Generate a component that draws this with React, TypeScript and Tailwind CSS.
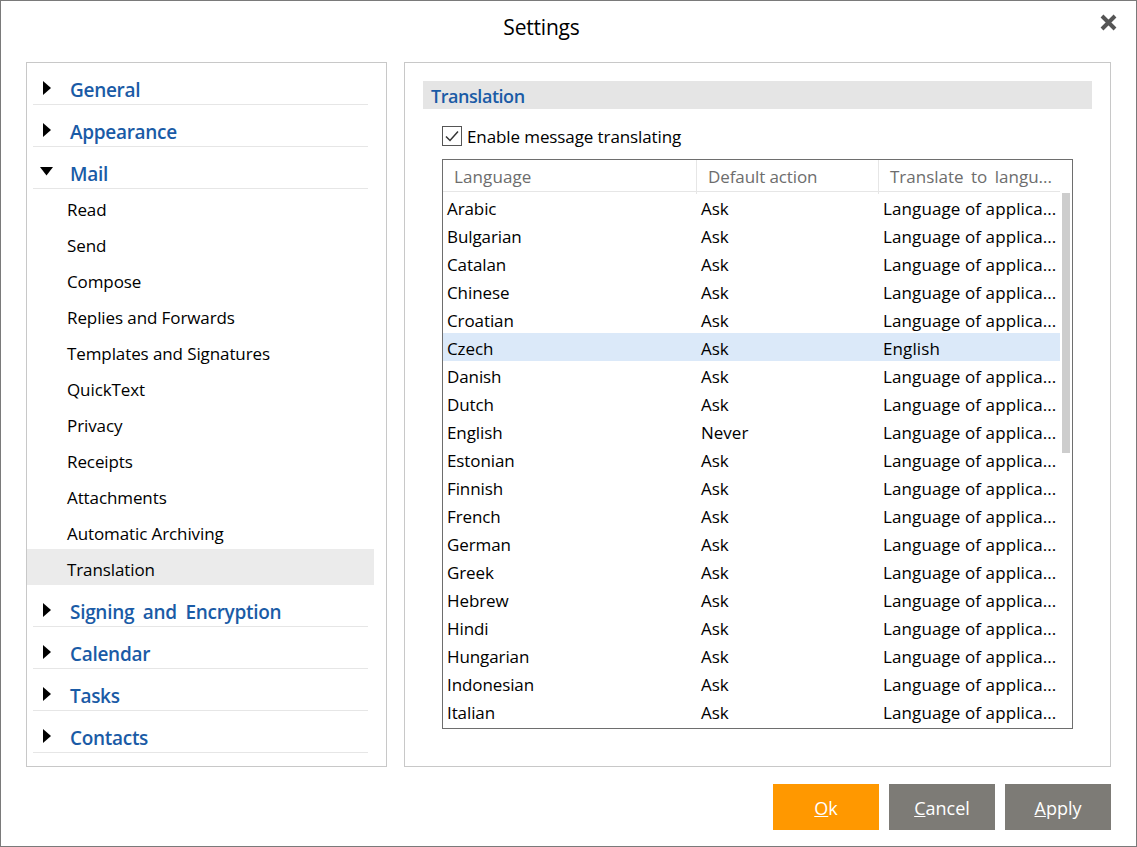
import { Fragment } from "react";

const languages = [
  "Arabic", "Bulgarian", "Catalan", "Chinese", "Croatian", "Czech", "Danish", "Dutch", "English", "Estonian",
  "Finnish", "French", "German", "Greek", "Hebrew", "Hindi", "Hungarian", "Indonesian", "Italian",
];

const mailItems = [
  "Read", "Send", "Compose", "Replies and Forwards", "Templates and Signatures", "QuickText", "Privacy",
  "Receipts", "Attachments", "Automatic Archiving", "Translation",
];

function NavHeading({ label, open }: { label: string; open?: boolean }) {
  return (
    <div className="relative h-[42px] mx-[6px] w-[335px] border-b border-[#e6e6e6] pl-[37px] pt-[12px] text-[19px] leading-[30px] tracking-[-0.3px] [word-spacing:4px] font-semibold text-[#1a5ba6]">
      {label}
      {open ? (
        <svg className="absolute left-[7px] top-[20px]" width="13" height="9" viewBox="0 0 13 9"><path d="M0 0H13L6.5 8.5Z" fill="#000" /></svg>
      ) : (
        <svg className="absolute left-[10px] top-[18px]" width="9" height="14" viewBox="0 0 9 14"><path d="M0 0L8 7L0 14Z" fill="#000" /></svg>
      )}
    </div>
  );
}

function ActionButton({ first, rest, color }: { first: string; rest: string; color: string }) {
  return (
    <button className={`w-[106px] h-[46px] pt-[2px] text-white text-[18px] ${color}`}>
      <u>{first}</u>{rest}
    </button>
  );
}

export default function App() {
  return (
    <div className="relative w-[1137px] h-[847px] bg-white border border-[#7a7a7a] text-black font-['Open_Sans',sans-serif] overflow-hidden">
      <div className="h-[61px] pt-[11px] pr-[54px] text-center text-[21px] leading-[30px] tracking-[-0.2px]">Settings</div>
      <svg className="absolute right-[19px] top-[13px]" width="17" height="17" viewBox="0 0 17 17">
        <path d="M2 2L15 15M15 2L2 15" stroke="#555" strokeWidth="4" />
      </svg>

      <div className="flex gap-[17px] pl-[25px]">
        {/* left tree */}
        <div className="w-[361px] h-[705px] border border-[#c8c8c8]">
          <NavHeading label="General" />
          <NavHeading label="Appearance" />
          <NavHeading label="Mail" open />
          {mailItems.map((item) => (
            <div
              key={item}
              className={`h-9 w-[347px] pl-[40px] pt-[6px] text-[17px] leading-[30px] tracking-[-0.1px] ${item === "Translation" ? "bg-[#ebebeb]" : ""}`}
            >
              {item}
            </div>
          ))}
          <NavHeading label="Signing and Encryption" />
          <NavHeading label="Calendar" />
          <NavHeading label="Tasks" />
          <NavHeading label="Contacts" />
        </div>

        {/* right panel */}
        <div className="w-[707px] h-[705px] border border-[#c8c8c8] pt-[18px] pl-[18px]">
          <div className="w-[669px] h-[28px] bg-[#e5e5e5] pl-[8px] text-[18px] leading-[30px] tracking-[-0.45px] font-semibold text-[#1a5ba6]">
            Translation
          </div>
          <div className="flex items-center gap-[5px] ml-[19px] mt-[17px] h-[20px] text-[17px] leading-[22px] tracking-[-0.1px]">
            <svg width="20" height="20" viewBox="0 0 20 20">
              <rect x="0.5" y="0.5" width="19" height="19" fill="#fff" stroke="#555" />
              <path d="M4 10.5L8 14.5L16 5.5" fill="none" stroke="#333" strokeWidth="1.5" />
            </svg>
            <span className="pt-[2px]">Enable message translating</span>
          </div>

          <div className="ml-[19px] mt-[13px] w-[631px] h-[570px] border border-[#6e6e6e] flex overflow-hidden">
            <div className="w-[617px]">
              <div className="grid grid-cols-[254px_182px_181px] h-[32px] border-b border-[#e6e6e6] text-[17px] leading-[34px] text-[#6d6d6d]">
                <div className="pl-[11px] border-r border-[#e6e6e6] tracking-[0.1px]">Language</div>
                <div className="pl-[11px] border-r border-[#e6e6e6] tracking-[-0.1px]">Default action</div>
                <div className="pl-[11px] [word-spacing:3px]">Translate to langu...</div>
              </div>
              <div className="grid grid-cols-[254px_182px_181px] pt-px text-[17px] leading-[32px]">
                {languages.map((lang) => {
                  const rowBg = lang === "Czech" ? "bg-[#dbe9f9]" : "";
                  return (
                    <Fragment key={lang}>
                      <div className={`h-[28px] pl-[4px] tracking-[-0.1px] ${rowBg}`}>{lang}</div>
                      <div className={`h-[28px] pl-[4px] ${rowBg}`}>{lang === "English" ? "Never" : "Ask"}</div>
                      <div className={`h-[28px] pl-[4px] whitespace-nowrap tracking-[0.1px] ${rowBg}`}>
                        {lang === "Czech" ? "English" : "Language of applica..."}
                      </div>
                    </Fragment>
                  );
                })}
              </div>
            </div>
            <div className="ml-[2px] mt-[33px] w-[8px] h-[260px] bg-[#cdcdcd]" />
          </div>
        </div>
      </div>

      <div className="flex justify-end gap-[10px] mt-[17px] pr-[25px]">
        <ActionButton first="O" rest="k" color="bg-[#ff9800]" />
        <ActionButton first="C" rest="ancel" color="bg-[#7d7b76]" />
        <ActionButton first="A" rest="pply" color="bg-[#7d7b76]" />
      </div>
    </div>
  );
}
